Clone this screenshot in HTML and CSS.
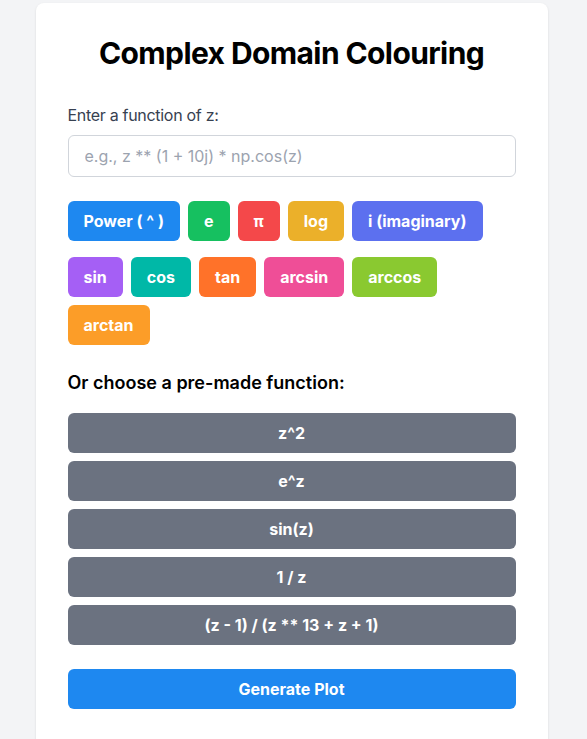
FILE: index.html
```html
<!DOCTYPE html>
<html lang="en">
<head>
<meta charset="utf-8">
<title>Complex Domain Colouring</title>
<link rel="stylesheet" href="styles.css">
</head>
<body>
<main class="card">
  <h1 class="title">Complex Domain Colouring</h1>
  <label class="label" for="fn">Enter a function of z:</label>
  <input id="fn" class="input" type="text" placeholder="e.g., z ** (1 + 10j) * np.cos(z)">
  <div class="row row-first">
    <button class="btn c-blue">Power ( ^ )</button>
    <button class="btn c-green">e</button>
    <button class="btn c-red">π</button>
    <button class="btn c-yellow">log</button>
    <button class="btn c-indigo">i (imaginary)</button>
  </div>
  <div class="row row-second">
    <button class="btn c-purple">sin</button>
    <button class="btn c-teal">cos</button>
    <button class="btn c-orange">tan</button>
    <button class="btn c-pink">arcsin</button>
    <button class="btn c-lime">arccos</button>
    <button class="btn c-amber">arctan</button>
  </div>
  <h2 class="subtitle">Or choose a pre-made function:</h2>
  <div class="presets">
    <button class="btn preset">z^2</button>
    <button class="btn preset">e^z</button>
    <button class="btn preset">sin(z)</button>
    <button class="btn preset">1 / z</button>
    <button class="btn preset">(z - 1) / (z ** 13 + z + 1)</button>
  </div>
  <button class="btn generate">Generate Plot</button>
</main>
</body>
</html>
```

FILE: styles.css
```css
* { box-sizing: border-box; }
html, body { margin: 0; padding: 0; }
body {
  background: #f3f4f6;
  font-family: Inter, "Noto Sans", "Liberation Sans", sans-serif;
  color: #111827;
}
.card {
  width: 512px;
  margin: 3px auto 0 auto;
  position: relative;
  left: -2px;
  background: #ffffff;
  border-radius: 8px;
  box-shadow: 0 1px 3px rgba(0,0,0,0.08), 0 1px 2px rgba(0,0,0,0.04);
  padding: 32px 32px 40px 32px;
  display: flex;
  flex-direction: column;
}
.title {
  margin: 0 0 32px 0;
  font-size: 30px;
  line-height: 36px;
  font-weight: 700;
  letter-spacing: -0.6px;
  text-align: center;
  color: #000000;
}
.label {
  font-size: 16px;
  line-height: 24px;
  letter-spacing: -0.3px;
  color: #374151;
  margin-bottom: 8px;
}
.input {
  width: 100%;
  height: 42px;
  padding: 8px 16px;
  font-family: inherit;
  font-size: 16px;
  line-height: 24px;
  border: 1px solid #d1d5db;
  border-radius: 6px;
  color: #111827;
  outline: none;
}
.input::placeholder { color: #9ca3af; }
.row {
  display: flex;
  flex-wrap: wrap;
  gap: 8px;
}
.row-first { margin-top: 24px; }
.row-second { margin-top: 16px; }
.btn {
  font-family: inherit;
  font-size: 16px;
  line-height: 24px;
  font-weight: 700;
  color: #ffffff;
  border: none;
  border-radius: 6px;
  padding: 8px 16px;
  height: 40px;
  cursor: pointer;
}
.c-blue { background: #1e88f0; }
.c-green { background: #16c060; }
.c-red { background: #f4484a; }
.c-yellow { background: #ebb02a; }
.c-indigo { background: #5c70ef; }
.c-purple { background: #a55ff5; }
.c-teal { background: #00b8a7; }
.c-orange { background: #ff7229; }
.c-pink { background: #ef4e97; }
.c-lime { background: #8ac930; }
.c-amber { background: #fc9d28; }
.subtitle {
  margin: 24px 0 16px 0;
  font-size: 18px;
  line-height: 28px;
  font-weight: 600;
  color: #000000;
}
.presets {
  display: flex;
  flex-direction: column;
  gap: 8px;
}
.preset {
  width: 100%;
  background: #6b7280;
}
.generate {
  width: 100%;
  margin-top: 24px;
  background: #1e88f0;
}
```
